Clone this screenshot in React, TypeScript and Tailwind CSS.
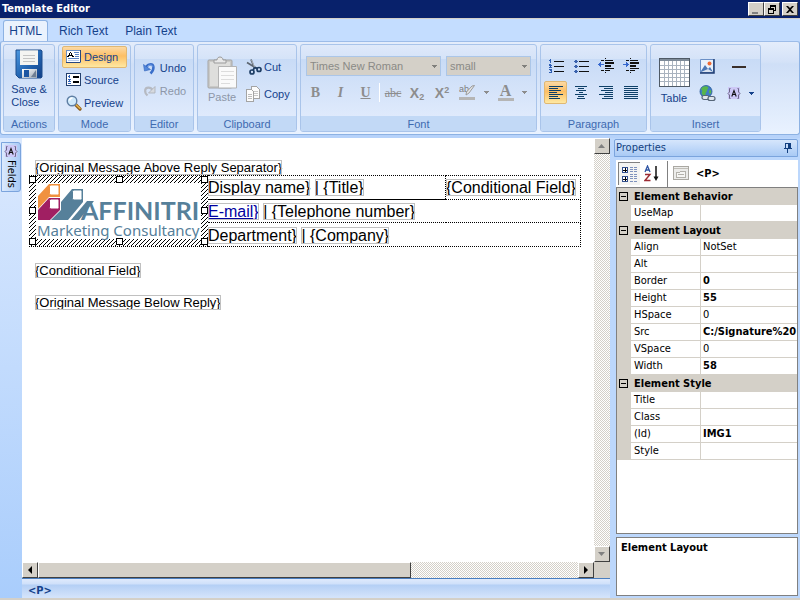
import React from "react";
import type { ReactNode } from "react";

const UI = "font-['Liberation_Sans',Arial,sans-serif]";
const TAHOMA = "font-['DejaVu_Sans_Condensed','DejaVu_Sans',sans-serif]";

/* ---------- icons ---------- */

function SaveIcon() {
  return (
    <svg width="30" height="30" viewBox="0 0 30 30" aria-hidden="true">
      <defs>
        <linearGradient id="disk" x1="0" y1="0" x2="1" y2="1">
          <stop offset="0" stopColor="#4f9ae0" />
          <stop offset="0.5" stopColor="#2467b4" />
          <stop offset="1" stopColor="#123f86" />
        </linearGradient>
        <linearGradient id="shutter" x1="0" y1="0" x2="1" y2="1">
          <stop offset="0" stopColor="#ffffff" />
          <stop offset="1" stopColor="#9aa6b4" />
        </linearGradient>
      </defs>
      <path d="M2 1h25l1 1v26l-1 1H5l-3-3z" fill="url(#disk)" stroke="#1d4c8c" />
      <path d="M6 1h18v15H6z" fill="#f4f4f2" />
      <path d="M6 1h18v1H6z" fill="#b9c4d0" />
      <path d="M9 6.500h12M9 9.500h12M9 12.500h12" stroke="#c4c4c4" />
      <path d="M8 20h15v9H8z" fill="url(#shutter)" />
      <path d="M10 21h5v7h-5z" fill="#1d56a2" />
      <path d="M17 28l5-7v7z" fill="#6f7f94" />
    </svg>
  );
}

function DesignIcon() {
  return (
    <svg width="16" height="14" viewBox="0 0 16 14" shapeRendering="crispEdges" aria-hidden="true">
      <path d="M0 0h15v13H0z" fill="#fff" />
      <path d="M.5.5h14v12H.5z" fill="none" stroke="#6b8fc4" />
      <path d="M0 13h15v-1H0zM14 0h1v13h-1z" fill="#27477e" />
      <path d="M4 2h1v1H4zM3 3h1v2H3zM5 3h1v2H5zM2 5h5v1H2zM1 6h2v1H1zM6 6h2v1H6z" fill="#000" />
      <path d="M8 2.500h5M9 4.500h4M9 6.500h4M2 8.500h11" stroke="#5b84c4" />
      <path d="M2 10.500h11" stroke="#b9cdea" />
    </svg>
  );
}

function SourceIcon() {
  return (
    <svg width="16" height="14" viewBox="0 0 16 14" shapeRendering="crispEdges" aria-hidden="true">
      <path d="M.5.5h14v12H.5z" fill="#fff" stroke="#24406e" />
      <path d="M3 2h1v3H3zM2 3h1v1H2zM2 6h3v1H2zM3 7h1v1H3zM2 8h3v1H2zM2 10h3v1H2z" fill="#2f61b8" />
      <path d="M7 3h6v2H7zM7 8h6v2H7z" fill="#000" />
    </svg>
  );
}

function PreviewIcon() {
  return (
    <svg width="16" height="16" viewBox="0 0 16 16" aria-hidden="true">
      <path d="M9.500 9.500l4.500 4.500" stroke="#8c5b1c" strokeWidth="3.200" strokeLinecap="round" />
      <path d="M10 9.800l4 3.800" stroke="#e6b54a" strokeWidth="1.400" strokeLinecap="round" />
      <circle cx="6" cy="6" r="4.800" fill="#cfe9fb" stroke="#5f7fa4" strokeWidth="1.400" />
      <path d="M3.500 5.500a3 3 0 013-2.500" stroke="#fff" strokeWidth="1.600" fill="none" />
    </svg>
  );
}

function UndoIcon() {
  return (
    <svg width="13" height="13" viewBox="0 0 13 13" aria-hidden="true">
      <path d="M3 6C4 2 9.500 1 10.300 4.500 10.900 7 9.500 9.500 7.500 11.500" fill="none" stroke="#3a6fca" strokeWidth="2.600" />
      <path d="M.5 2.500L1.500 9l6-1.500z" fill="#5388dc" stroke="#3465bb" strokeWidth=".6" />
      <path d="M4.500 4.500C6 2.800 9 2.500 9.800 4.500" fill="none" stroke="#8db4f2" />
    </svg>
  );
}

function RedoIcon() {
  return (
    <svg width="13" height="13" viewBox="0 0 13 13" aria-hidden="true">
      <path d="M9.500 5C8 2 2.800 1.500 2.200 5 1.800 7.500 2.800 9 4.500 10.500" fill="none" stroke="#b6bac2" strokeWidth="2.200" />
      <path d="M12 1.500v6.500H5.500z" fill="#d6d9de" stroke="#a9adb5" strokeWidth=".8" />
    </svg>
  );
}

function PasteIcon() {
  return (
    <svg width="30" height="33" viewBox="0 0 30 33" aria-hidden="true">
      <rect x="1" y="4" width="24" height="28" rx="1" fill="#c9c9c7" stroke="#a5a5a5" />
      <path d="M3 6h20v24H3z" fill="#dededc" />
      <path d="M7 7V4h3c0-4 6-4 6 0h3v3z" fill="#e8e8e8" stroke="#9b9b9b" />
      <path d="M11.500 10.500h18v21.500h-18z" fill="#fafafa" stroke="#b4b4b4" />
      <path d="M14 15.500h13M14 19.500h13M14 23.500h13M14 27.500h9" stroke="#dcdcdc" />
    </svg>
  );
}

function CutIcon() {
  return (
    <svg width="16" height="16" viewBox="0 0 16 16" aria-hidden="true">
      <path d="M5 .5L8.500 9M1 3.500l10 6" stroke="#5c6570" strokeWidth="1.700" />
      <path d="M5.500 1l3 7" stroke="#d4dae0" strokeWidth=".6" />
      <circle cx="13" cy="10.500" r="2" fill="none" stroke="#1f3f66" strokeWidth="1.700" />
      <circle cx="6" cy="13" r="2" fill="none" stroke="#1f3f66" strokeWidth="1.700" />
      <path d="M8.500 8.500L7 11.500M8.500 8.500l3 1" stroke="#1f3f66" strokeWidth="1.700" />
    </svg>
  );
}

function CopyIcon() {
  return (
    <svg width="16" height="16" viewBox="0 0 16 16" shapeRendering="crispEdges" aria-hidden="true">
      <path d="M5.500.5h5l3 3v9h-8z" fill="#fcfcfc" stroke="#a4a4a4" />
      <path d="M8 5.500h4M8 7.500h4M8 9.500h4" stroke="#c8c8c8" />
      <path d="M.5 3.500h5l2 2v9.500h-7z" fill="#fcfcfc" stroke="#a4a4a4" />
      <path d="M2 8.500h4M2 10.500h4M2 12.500h4" stroke="#bcbcbc" />
    </svg>
  );
}

function Caret({ color }: { color: string }) {
  return (
    <svg width="5" height="3" viewBox="0 0 5 3" shapeRendering="crispEdges" aria-hidden="true">
      <path d="M0 0h5v1H0zM1 1h3v1H1zM2 2h1v1H2z" fill={color} />
    </svg>
  );
}

function HighlightIcon() {
  return (
    <svg width="17" height="17" viewBox="0 0 17 17" aria-hidden="true">
      <text x="0" y="8" fontSize="9" fill="#7d7d7d" fontFamily="Liberation Sans, sans-serif">ab</text>
      <path d="M15.500 1.500L10 9l-3 2 .5-3 5.500-6z" fill="#e6e6e6" stroke="#9b9b9b" />
      <path d="M0 13h16v3H0z" fill="#b5b5b5" />
    </svg>
  );
}

function ListIcon({ ordered }: { ordered: boolean }) {
  return (
    <svg width="16" height="16" viewBox="0 0 16 16" shapeRendering="crispEdges" aria-hidden="true">
      {ordered ? (
        <path d="M2 1h1v4H2zM1 2h1v1H1zM1 6h2v1h1v1H3v1h1v1H1V9h1V8H1zM1 11h3v4H1v-1h2v-1H2v-1H1z" fill="#2f5fb5" />
      ) : (
        <path d="M2 2h2v3H2zM1 3h4v1H1zM2 7h2v3H2zM1 8h4v1H1zM2 12h2v3H2zM1 13h4v1H1z" fill="#3a62ad" />
      )}
      <path d="M6 3.500h10M6 8.500h10M6 13.500h10" stroke="#111" />
    </svg>
  );
}

function IndentIcon({ out }: { out: boolean }) {
  return (
    <svg width="16" height="16" viewBox="0 0 16 16" shapeRendering="crispEdges" aria-hidden="true">
      <path d="M3 2h3v1H3zM7 2h8v1H7zM7 4h9v2H7zM7 7h6v2H7zM7 10h9v1H7zM3 12h3v1H3zM7 12h5v1H7zM7 0h1v1H7zM7 14h1v1H7z" fill="#111" />
      <path d={out ? "M0 6h1V5h1V4h1v2h3v1H3v2H2V8H1V7H0z" : "M6 6H5V5H4V4H3v2H0v1h3v2h1V8h1V7h1z"} fill="#3668cf" />
    </svg>
  );
}

const ALIGN_PATHS = {
  left: "M0 1.500h14M0 3.500h9M0 5.500h12M0 7.500h8M0 9.500h14M0 11.500h9M0 13.500h11",
  center: "M1 1.500h12M4 3.500h6M2 5.500h10M5 7.500h4M1 9.500h12M4 11.500h6M3 13.500h8",
  right: "M0 1.500h14M5 3.500h9M2 5.500h12M6 7.500h8M0 9.500h14M5 11.500h9M3 13.500h11",
  justify: "M0 1.500h14M0 3.500h14M0 5.500h14M0 7.500h14M0 9.500h14M0 11.500h14M0 13.500h14",
};

function AlignIcon({ kind }: { kind: keyof typeof ALIGN_PATHS }) {
  return (
    <svg width="14" height="15" viewBox="0 0 14 15" shapeRendering="crispEdges" aria-hidden="true">
      <path d={ALIGN_PATHS[kind]} stroke="#0e4068" />
    </svg>
  );
}

function TableIcon() {
  return (
    <svg width="31" height="29" viewBox="0 0 31 29" shapeRendering="crispEdges" aria-hidden="true">
      <path d="M.5.5h30v28H.5z" fill="#fff" stroke="#4f5a66" />
      <path d="M1 1h29v2H1z" fill="#7e8b99" />
      <path d="M5.500 3v25M9.500 3v25M13.500 3v25M17.500 3v25M21.500 3v25M25.500 3v25M1 7.500h29M1 11.500h29M1 15.500h29M1 19.500h29M1 23.500h29" stroke="#a9b3bf" />
    </svg>
  );
}

function PictureIcon() {
  return (
    <svg width="15" height="15" viewBox="0 0 15 15" aria-hidden="true">
      <path d="M.5.5h13v13H.5z" fill="#e8f1fc" stroke="#6a8fc6" />
      <path d="M14 0v14H0" fill="none" stroke="#1f3c72" strokeWidth="1.500" />
      <circle cx="9.500" cy="4.500" r="2" fill="#ee6a35" />
      <path d="M1 12l4-6 3 4 2-2 3 5H1z" fill="#4b76b5" />
      <path d="M1 13l7-3 5 3z" fill="#fff" opacity=".8" />
    </svg>
  );
}

function LinkIcon() {
  return (
    <svg width="17" height="17" viewBox="0 0 17 17" aria-hidden="true">
      <circle cx="7" cy="6.500" r="6" fill="#3f7cc6" stroke="#2a5a96" strokeWidth=".8" />
      <path d="M3 2.500C5 1 8 .8 9 2c1 1.500-1 2-1 3.500S6 8 6.500 10 4 11 3 9s1-2.500 0-3.500-1-2 0-3zM10.500 5c2-.5 2 1.500 1.500 3s-2 .5-2-.8.500-1 .5-2.200z" fill="#58b54a" />
      <rect x="3" y="10.500" width="7" height="4" rx="2" fill="#dfe5ec" stroke="#566678" strokeWidth="1.200" />
      <rect x="9" y="11.500" width="7" height="4" rx="2" fill="#dfe5ec" stroke="#566678" strokeWidth="1.200" />
    </svg>
  );
}

function BraceFieldIcon() {
  return (
    <svg width="14" height="13" viewBox="0 0 14 13" aria-hidden="true">
      <path d="M1 0h12v12H1z" fill="#cdc8f6" />
      <path d="M3.500 1.500h-1v3.500L1 6.500 2.500 8v3.500h1M10.500 1.500h1v3.500L13 6.500 11.500 8v3.500h-1" fill="none" stroke="#6d6788" />
      <path d="M4.800 9.500L7 3.500l2.200 6M5.500 7.500h3" fill="none" stroke="#111" strokeWidth="1.100" />
    </svg>
  );
}

function CategorizedIcon() {
  return (
    <svg width="17" height="17" viewBox="0 0 17 17" shapeRendering="crispEdges" aria-hidden="true">
      <path d="M1.500 1.500h5v5h-5zM1.500 10.500h5v5h-5z" fill="#fff" stroke="#33508f" />
      <path d="M2 4h4M2 13h4M4 2v4M4 11v4" stroke="#000" />
      <path d="M9 1.500h3M13 1.500h3M9 3.500h3M13 3.500h3M9 5.500h3M13 5.500h3M9 8.500h3M13 8.500h3M9 10.500h3M13 10.500h3M9 12.500h3M13 12.500h3M9 15.500h3M13 15.500h3" stroke="#7e92bd" />
    </svg>
  );
}

function SortIcon() {
  return (
    <svg width="16" height="17" viewBox="0 0 16 17" aria-hidden="true">
      <path d="M1 7L3.500 1 6 7M2 5h3" fill="none" stroke="#2f55a4" strokeWidth="1.300" />
      <path d="M1 9.500h5l-5 6h5.500" fill="none" stroke="#9b2b33" strokeWidth="1.400" />
      <path d="M12 1v13" stroke="#111" strokeWidth="1.500" />
      <path d="M9.500 11.500h5L12 16z" fill="#111" />
    </svg>
  );
}

function PagesIcon() {
  return (
    <svg width="17" height="15" viewBox="0 0 17 15" shapeRendering="crispEdges" aria-hidden="true">
      <path d="M.5.5h15v13H.5z" fill="#ececea" stroke="#aaa8a2" />
      <path d="M1 2h14v1H1z" fill="#c0beb8" />
      <path d="M3.500 6.500h3l1-1h5v6h-9z" fill="#f6f6f4" stroke="#b3b1ab" />
      <path d="M5 8.500h6" stroke="#b3b1ab" />
    </svg>
  );
}

function PinIcon() {
  return (
    <svg width="8" height="10" viewBox="0 0 8 10" shapeRendering="crispEdges" aria-hidden="true">
      <path d="M1 0h6v5h1v1H0V5h1zM2 1v4h2V1zM3 6h1v4H3z" fill="#123f80" fillRule="evenodd" />
    </svg>
  );
}

/* ---------- ribbon ---------- */

function Group({ title, className, children }: { title: string; className: string; children: ReactNode }) {
  return (
    <section
      aria-label={title}
      className={`flex flex-col overflow-hidden rounded-[3px] border border-[#a9c4ea] bg-[linear-gradient(#dfe9fa_0px,#d5e3f8_14px,#c8dbf6_14px,#dfeafc_71px)] ${className}`}
    >
      <div className="flex h-[71px]">{children}</div>
      <h2 className="h-[15px] bg-[#c2d9f6] text-center leading-4 text-[#3e6ab0]">{title}</h2>
    </section>
  );
}

const HOT = "rounded-[2px] border border-[#e0b873] bg-[linear-gradient(#fcd9a4,#fdbf65_45%,#fee8a2)]";

function RowButton({ icon, label, className = "" }: { icon: ReactNode; label: string; className?: string }) {
  return (
    <button type="button" className={`flex h-[22px] items-center gap-0.5 ${className}`}>
      <span className="flex w-4 justify-center">{icon}</span>
      {label}
    </button>
  );
}

function FontSelect({ label, value, className }: { label: string; value: string; className: string }) {
  return (
    <div className={`relative ${className}`}>
      <select
        aria-label={label}
        disabled
        className="h-5 w-full appearance-none border border-[#abc6e8] bg-[#d4d0c8] pl-[3px] text-[#8a8a86] opacity-100"
      >
        <option>{value}</option>
      </select>
      <span className="pointer-events-none absolute inset-y-0 right-1 flex items-center">
        <Caret color="#80807c" />
      </span>
    </div>
  );
}

function IconButton({ label, className, children }: { label: string; className: string; children: ReactNode }) {
  return (
    <button type="button" aria-label={label} className={`flex h-[23px] items-center justify-center ${className}`}>
      {children}
    </button>
  );
}

function Ribbon() {
  return (
    <div className="rounded-[3px] border border-[#8db2e3] border-t-[#9dbce8] bg-[linear-gradient(#e4edfb,#d4e2f8_20px,#cfdff7_22px,#e9f2ff)] p-0.5">
      <div className="flex gap-[3px] text-[#15428b]">
        <Group title="Actions" className="w-[52px]">
          <button type="button" className="flex flex-1 flex-col items-center pt-1">
            <SaveIcon />
            <span className="mt-1 text-left leading-[13px]">
              Save &amp;
              <br />
              Close
            </span>
          </button>
        </Group>
        <Group title="Mode" className="w-[73px]">
          <div className="flex flex-1 flex-col gap-px px-[3px] pt-px">
            <RowButton icon={<DesignIcon />} label="Design" className={`px-[3px] ${HOT}`} />
            <RowButton icon={<SourceIcon />} label="Source" className="px-1" />
            <RowButton icon={<PreviewIcon />} label="Preview" className="px-1" />
          </div>
        </Group>
        <Group title="Editor" className="w-[60px]">
          <div className="flex flex-1 flex-col items-center gap-px pt-3">
            <RowButton icon={<UndoIcon />} label="Undo" />
            <RowButton icon={<RedoIcon />} label="Redo" className="text-[#8d97a8]" />
          </div>
        </Group>
        <Group title="Clipboard" className="w-[100px]">
          <button type="button" className="flex w-12 flex-col items-center pt-[11px] text-[#8d97a8]">
            <PasteIcon />
            <span className="leading-4">Paste</span>
          </button>
          <div className="flex flex-col gap-[5px] pt-[11px]">
            <RowButton icon={<CutIcon />} label="Cut" />
            <RowButton icon={<CopyIcon />} label="Copy" />
          </div>
        </Group>
        <Group title="Font" className="w-[237px]">
          <div className="flex flex-1 flex-col px-[5px] pt-[11px]">
            <div className="flex gap-[5px]">
              <FontSelect label="Font name" value="Times New Roman" className="w-[135px]" />
              <FontSelect label="Font size" value="small" className="w-[85px]" />
            </div>
            <div className="flex pt-[5px] text-[#8d8d8d]">
              <IconButton label="Bold" className="w-[19px] font-['Liberation_Serif',serif] text-sm font-bold">B</IconButton>
              <IconButton label="Italic" className="w-[31px] font-['Liberation_Serif',serif] text-sm font-bold italic">I</IconButton>
              <IconButton label="Underline" className="w-[19px] font-['Liberation_Serif',serif] text-sm font-bold underline">U</IconButton>
              <span className="mx-1 my-0.5 w-px bg-white" />
              <IconButton label="Strikethrough" className="w-[18px] font-['Liberation_Serif',serif] text-xs line-through">abc</IconButton>
              <IconButton label="Subscript" className="ml-1 w-[22px] text-sm font-bold">
                <span>X<sub className="text-[9px]">2</sub></span>
              </IconButton>
              <IconButton label="Superscript" className="ml-0.5 w-6 text-sm font-bold">
                <span>X<sup className="text-[9px]">2</sup></span>
              </IconButton>
              <IconButton label="Highlight" className="ml-1 w-[32px] gap-2">
                <HighlightIcon />
                <Caret color="#8d8d8d" />
              </IconButton>
              <IconButton label="Font colour" className="ml-1.5 w-[32px] gap-2">
                <span className="h-[17px] w-4 border-b-[3px] border-[#b5b5b5] text-center font-['Liberation_Serif',serif] text-base leading-[14px] font-bold">A</span>
                <Caret color="#8d8d8d" />
              </IconButton>
            </div>
          </div>
        </Group>
        <Group title="Paragraph" className="w-[107px]">
          <div className="grid flex-1 grid-cols-4 content-start gap-x-0.5 gap-y-1 px-[3px] pt-[9px]">
            <IconButton label="Numbered list" className=""><ListIcon ordered /></IconButton>
            <IconButton label="Bulleted list" className=""><ListIcon ordered={false} /></IconButton>
            <IconButton label="Decrease indent" className=""><IndentIcon out /></IconButton>
            <IconButton label="Increase indent" className=""><IndentIcon out={false} /></IconButton>
            <IconButton label="Align left" className={HOT}><AlignIcon kind="left" /></IconButton>
            <IconButton label="Align centre" className=""><AlignIcon kind="center" /></IconButton>
            <IconButton label="Align right" className=""><AlignIcon kind="right" /></IconButton>
            <IconButton label="Justify" className=""><AlignIcon kind="justify" /></IconButton>
          </div>
        </Group>
        <Group title="Insert" className="w-[111px]">
          <button type="button" className="flex w-[46px] flex-col items-center pt-[13px]">
            <TableIcon />
            <span className="mt-[3px] leading-4">Table</span>
          </button>
          <div className="grid flex-1 grid-cols-[26px_1fr] content-start gap-y-1 pt-[10px]">
            <IconButton label="Insert picture" className="w-5"><PictureIcon /></IconButton>
            <IconButton label="Insert line" className="w-[31px]"><span className="h-0.5 w-3.5 bg-[#3a2f2a]" /></IconButton>
            <IconButton label="Insert link" className="w-5"><LinkIcon /></IconButton>
            <IconButton label="Insert field" className="w-[34px] gap-2"><BraceFieldIcon /><Caret color="#15428b" /></IconButton>
          </div>
        </Group>
      </div>
    </div>
  );
}

/* ---------- window chrome ---------- */

const BEVEL = "border border-t-white border-l-white border-r-[#404040] border-b-[#404040] bg-[#d4d0c8]";

function TitleBar() {
  const glyphs = [
    { label: "Minimize", d: "M2 8h6v2H2z", fill: "#808080", gap: "" },
    { label: "Restore", d: "M4 1h6v6H8v3H2V4h2zM5 3v1h3v2h1V3zM3 6v3h4V6z", fill: "#000", gap: "" },
    { label: "Close", d: "M2 2h2l2 2 2-2h2L7 5.500 10 9H8L6 7 4 9H2l3-3.500z", fill: "#000", gap: "ml-0.5" },
  ];
  return (
    <header className={`flex h-[18px] items-center bg-[#08216b] pr-0.5 pl-0.5 ${TAHOMA}`}>
      <h1 className="flex-1 font-bold text-white">Template Editor</h1>
      {glyphs.map((g) => (
        <button key={g.label} type="button" aria-label={g.label} className={`flex h-3.5 w-4 items-center justify-center ${BEVEL} ${g.gap}`}>
          <svg width="12" height="11" viewBox="0 0 12 11" aria-hidden="true">
            <path d={g.d} fill={g.fill} fillRule="evenodd" />
          </svg>
        </button>
      ))}
    </header>
  );
}

function Tabs() {
  return (
    <nav className="flex h-[22px] items-end bg-[#c4ddff] pl-[3px] text-xs text-[#15428b]">
      <a href="#html" className="flex h-[21px] w-[45px] items-center justify-center rounded-t-[3px] border border-b-0 border-[#8db2e3] bg-[#eaf2fd]">HTML</a>
      <a href="#rich" className="flex h-[21px] items-center px-[11px]">Rich Text</a>
      <a href="#plain" className="flex h-[21px] items-center px-1.5">Plain Text</a>
    </nav>
  );
}

const DITHER = "bg-[repeating-conic-gradient(#ffffff_0_25%,#d4d0c8_0_50%)] bg-[length:2px_2px]";

function ScrollButton({ label, d, fill }: { label: string; d: string; fill: string }) {
  return (
    <button type="button" aria-label={label} className={`flex size-4 shrink-0 items-center justify-center ${BEVEL}`}>
      <svg width="8" height="8" viewBox="0 0 8 8" aria-hidden="true"><path d={d} fill={fill} /></svg>
    </button>
  );
}

/* ---------- document ---------- */

function Field({ children, link = false }: { children: ReactNode; link?: boolean }) {
  const frame = "outline outline-1 -outline-offset-1 outline-[#c0c0c0]";
  return link ? (
    <a href="#mail" className={`${frame} text-[#0000a0] underline`}>{children}</a>
  ) : (
    <span className={frame}>{children}</span>
  );
}

function SelectedLogo() {
  const handles = [
    [0, 0], [87, 0], [172, 0],
    [0, 31], [172, 31],
    [0, 62], [87, 62], [172, 62],
  ];
  return (
    <svg width="179" height="70" viewBox="0 0 179 70" role="img" aria-label="Affinitri Marketing Consultancy" className="block">
      <defs>
        <pattern id="hatch" width="4" height="4" patternUnits="userSpaceOnUse">
          <path d="M0 0h4v4H0z" fill="#fff" />
          <path d="M3 0h1v1H3zM2 1h1v1H2zM1 2h1v1H1zM0 3h1v1H0z" fill="#000" shapeRendering="crispEdges" />
        </pattern>
      </defs>
      <path d="M0 0h179v70H0z" fill="#fff" />
      <path d="M0 0h179v70H0zM7 7v56h165V7z" fill="url(#hatch)" fillRule="evenodd" />
      <path d="M9 20L20 8h11v13H20L9 33z" fill="#f0913f" />
      <path d="M22 44l10-10V26l11-13h11v13L39 44z" fill="#56809a" />
      <path d="M9 34l11-12h11v12L21 44H9z" fill="#a01f62" />
      <g fill="#fff">
        <rect x="20.500" y="9" width="9.500" height="10" rx="1.500" stroke="#f0913f" />
        <rect x="20.500" y="23" width="9.500" height="10" rx="1.500" stroke="#a01f62" />
        <rect x="43.500" y="14" width="9.500" height="10" rx="1.500" stroke="#56809a" />
      </g>
      <path d="M42 44l16-19h7L50 44z" fill="#56809a" />
      <text x="52" y="44" fill="#56809a" fontFamily="Lato, sans-serif" fontSize="25" fontWeight="bold">AFFINITRI</text>
      <text x="8" y="60" fill="#56809a" fontFamily="Noto Sans, sans-serif" fontSize="15">Marketing Consultancy</text>
      <g fill="#fff" stroke="#000">
        {handles.map(([x, y]) => (
          <rect key={`${x}-${y}`} x={x + 0.5} y={y + 0.5} width="6" height="6" />
        ))}
      </g>
    </svg>
  );
}

function Document() {
  return (
    <main className="flex-1 overflow-hidden bg-white pt-[22px] pl-[7px] font-['Liberation_Sans',Arial,sans-serif] text-[13px] leading-4 text-black">
      <p className="pl-1.5 leading-[15px]"><Field>{"{Original Message Above Reply Separator}"}</Field></p>
      <table className="w-[552px] border-collapse text-base leading-5">
        <tbody>
          <tr>
            <td rowSpan={3} className="w-[179px] border-y border-dotted border-black p-0"><SelectedLogo /></td>
            <td className="border-t border-b border-t-black border-b-black p-0 pt-0.5 [border-top-style:dotted]">
              <Field>Display name{"}"}</Field> <Field>| {"{Title}"}</Field>
            </td>
            <td className="w-[135px] border border-dotted border-black p-0 pt-0.5"><Field>{"{Conditional Field}"}</Field></td>
          </tr>
          <tr>
            <td colSpan={2} className="border border-l-0 border-dotted border-black p-0 pt-0.5">
              <Field link>E-mail{"}"}</Field> <Field>| {"{Telephone number}"}</Field>
            </td>
          </tr>
          <tr>
            <td colSpan={2} className="border border-l-0 border-dotted border-black p-0 pt-0.5">
              <Field>Department{"}"}</Field> <Field>| {"{Company}"}</Field>
            </td>
          </tr>
        </tbody>
      </table>
      <p className="pt-4 pl-1.5"><Field>{"{Conditional Field}"}</Field></p>
      <p className="pt-4 pl-1.5"><Field>{"{Original Message Below Reply}"}</Field></p>
    </main>
  );
}

function EditorPane() {
  return (
    <div className="flex min-w-0 flex-1 flex-col">
      <div className="flex min-h-0 flex-1">
        <Document />
        <div className={`flex w-4 flex-col justify-between ${DITHER}`}>
          <ScrollButton label="Scroll up" d="M0 6h7L3.500 2z" fill="#808080" />
          <ScrollButton label="Scroll down" d="M0 2h7L3.500 6z" fill="#808080" />
        </div>
      </div>
      <div className="flex h-4 bg-[#d4d0c8]">
        <div className={`flex flex-1 ${DITHER}`}>
          <ScrollButton label="Scroll left" d="M6 0v8L2 4z" fill="#000" />
          <div className="flex flex-1">
            <div className={`w-[69%] ${BEVEL}`} />
          </div>
          <ScrollButton label="Scroll right" d="M2 0v8l4-4z" fill="#000" />
        </div>
        <div className="w-4" />
      </div>
      <footer className={`h-5 border-t border-[#4a7ebf] bg-[linear-gradient(#dfeafc_0px,#cfe0fa_5px,#b4cff5_6px,#d3e3fb_18px)] pl-1.5 leading-[23px] font-bold text-[#15428b] ${TAHOMA}`}>
        {"<P>"}
      </footer>
    </div>
  );
}

/* ---------- properties ---------- */

type Row = { name: string; value?: string; bold?: boolean };

const SECTIONS: { title: string; rows: Row[] }[] = [
  { title: "Element Behavior", rows: [{ name: "UseMap" }] },
  {
    title: "Element Layout",
    rows: [
      { name: "Align", value: "NotSet" },
      { name: "Alt" },
      { name: "Border", value: "0", bold: true },
      { name: "Height", value: "55", bold: true },
      { name: "HSpace", value: "0" },
      { name: "Src", value: "C:/Signature%20", bold: true },
      { name: "VSpace", value: "0" },
      { name: "Width", value: "58", bold: true },
    ],
  },
  {
    title: "Element Style",
    rows: [{ name: "Title" }, { name: "Class" }, { name: "(Id)", value: "IMG1", bold: true }, { name: "Style" }],
  },
];

function Properties() {
  return (
    <aside className={`flex w-[186px] flex-col pr-0.5 pb-0.5 text-black ${TAHOMA}`}>
      <h2 className="mt-px flex h-[18px] items-center justify-between rounded-t-[2px] border border-[#7ba4dd] bg-[linear-gradient(#d6e6fc,#a9caf5)] pr-[5px] pl-px text-[#123f80]">
        Properties
        <PinIcon />
      </h2>
      <div className="flex min-h-0 flex-1 flex-col gap-[3px] pt-[3px] pl-0.5">
        <div className="flex min-h-0 flex-1 flex-col">
          <div className="flex h-[27px] items-center bg-white pl-0.5">
            <button type="button" aria-label="Categorized" className="flex h-[23px] w-[22px] items-center justify-center border-t border-l border-[#808080] bg-[#f4f4f2]"><CategorizedIcon /></button>
            <button type="button" aria-label="Alphabetical" className="flex h-[23px] w-5 items-center justify-end"><SortIcon /></button>
            <span className="mr-[5px] ml-[7px] h-[26px] w-px bg-[#808080]" />
            <button type="button" aria-label="Property pages" className="w-[18px]"><PagesIcon /></button>
            <span className="ml-[5px] font-bold">{"<P>"}</span>
          </div>
          <div className="min-h-0 flex-1 overflow-hidden border border-[#808080] bg-white">
            <table className="w-full table-fixed border-separate border-spacing-0 text-left leading-4">
              <colgroup>
                <col className="w-[14px]" />
                <col className="w-[70px]" />
                <col />
              </colgroup>
              {SECTIONS.map((s) => (
                <tbody key={s.title}>
                  <tr className="h-[17px] bg-[#d4d0c8]">
                    <td className="p-0">
                      <button type="button" aria-label={`Collapse ${s.title}`} className="ml-0.5 flex size-[9px] items-center justify-center border border-black">
                        <span className="h-px w-[5px] bg-black" />
                      </button>
                    </td>
                    <th colSpan={2} className="p-0 pt-px pl-[3px] font-bold">{s.title}</th>
                  </tr>
                  {s.rows.map((r) => (
                    <tr key={r.name} className="h-[17px]">
                      <td className="bg-[#d4d0c8] p-0" />
                      <th className="border-r border-b border-[#d4d0c8] p-0 pl-[3px] font-normal">{r.name}</th>
                      <td className={`overflow-hidden border-b border-[#d4d0c8] p-0 pl-0.5 whitespace-nowrap ${r.bold ? "font-bold" : ""}`}>{r.value}</td>
                    </tr>
                  ))}
                </tbody>
              ))}
            </table>
          </div>
        </div>
        <div className="h-[59px] border border-[#808080] bg-white px-1 pt-0.5 leading-4 font-bold">Element Layout</div>
      </div>
    </aside>
  );
}

export default function App() {
  return (
    <div className={`flex h-screen flex-col border-b-2 border-[#d4d0c8] bg-[#bcd7fc] text-[11px] leading-[14px] ${UI}`}>
      <TitleBar />
      <div className="border-t border-[#d4d0c8]" />
      <Tabs />
      <Ribbon />
      <div className="flex min-h-0 flex-1 gap-1 border-t-3 border-[#b6d2fa]">
        <div className="flex min-w-0 flex-1">
          <div className="w-[22px] bg-[linear-gradient(#dbe9fe,#a9cdfc)] pt-1 pl-px">
            <button type="button" className={`flex h-[50px] w-[20px] flex-col items-center gap-0.5 rounded-r-[3px] border border-[#7ba4dd] bg-[linear-gradient(90deg,#dceafd,#a9caf5)] pt-0.5 text-black ${TAHOMA}`}>
              <BraceFieldIcon />
              <span className="[writing-mode:vertical-rl]">Fields</span>
            </button>
          </div>
          <EditorPane />
        </div>
        <Properties />
      </div>
    </div>
  );
}
